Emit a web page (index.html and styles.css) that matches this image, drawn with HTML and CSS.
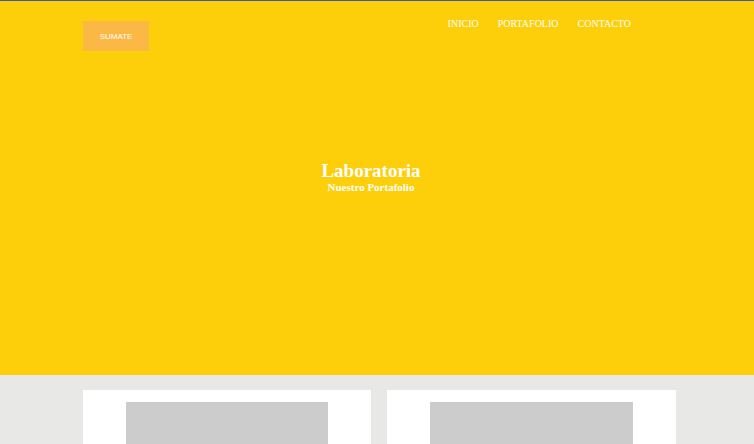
FILE: index.html
```
<!DOCTYPE html>
<html lang="es">
<head>
<meta charset="utf-8">
<title>Laboratoria</title>
<link rel="stylesheet" href="styles.css">
</head>
<body>
<header class="hero">
  <div class="topbar">
    <a class="join-btn" href="#">SUMATE</a>
    <nav class="nav">
      <a href="#">INICIO</a>
      <a href="#">PORTAFOLIO</a>
      <a href="#">CONTACTO</a>
    </nav>
  </div>
  <div class="hero-text">
    <h1 class="title">Laboratoria</h1>
    <h2 class="subtitle">Nuestro Portafolio</h2>
  </div>
</header>
<section class="portfolio">
  <div class="grid">
    <div class="card"><div class="thumb"></div></div>
    <div class="card"><div class="thumb"></div></div>
  </div>
</section>
</body>
</html>
```
FILE: styles.css
```
html, body {
  margin: 0;
  padding: 0;
}
body {
  background: #e8e8e6;
  font-family: "Liberation Serif", "Times New Roman", serif;
}
.hero {
  height: 374px;
  border-top: 1px solid #3b5ca0;
  background: #fdce0a;
  display: flex;
  flex-direction: column;
}
.topbar {
  width: 593px;
  margin-left: 83px;
  padding-top: 17px;
  display: flex;
  justify-content: space-between;
  align-items: flex-start;
}
.join-btn {
  margin-top: 3px;
  width: 66px;
  height: 30px;
  background: #fcb844;
  color: #fff;
  text-decoration: none;
  font-family: "Liberation Sans", Arial, sans-serif;
  font-size: 8px;
  display: flex;
  align-items: center;
  justify-content: center;
}
.nav {
  display: flex;
  gap: 19px;
  padding-right: 45px;
}
.nav a {
  color: #fff;
  text-decoration: none;
  font-size: 10px;
  line-height: 12px;
}
.hero-text {
  margin-top: 110px;
  padding-right: 12px;
  text-align: center;
  color: #fff;
}
.title {
  margin: 0;
  font-size: 19px;
  line-height: 20px;
  font-weight: bold;
}
.subtitle {
  margin: 0;
  font-size: 11px;
  line-height: 12px;
  font-weight: bold;
}
.portfolio {
  padding-top: 15px;
  padding-bottom: 20px;
}
.grid {
  width: 593px;
  margin-left: 83px;
  display: grid;
  grid-template-columns: 288px 289px;
  gap: 16px;
}
.card {
  background: #fff;
  padding-top: 12px;
  padding-bottom: 20px;
  display: flex;
  justify-content: center;
}
.thumb {
  width: 70%;
  height: 160px;
  background: #cccccc;
}
```
